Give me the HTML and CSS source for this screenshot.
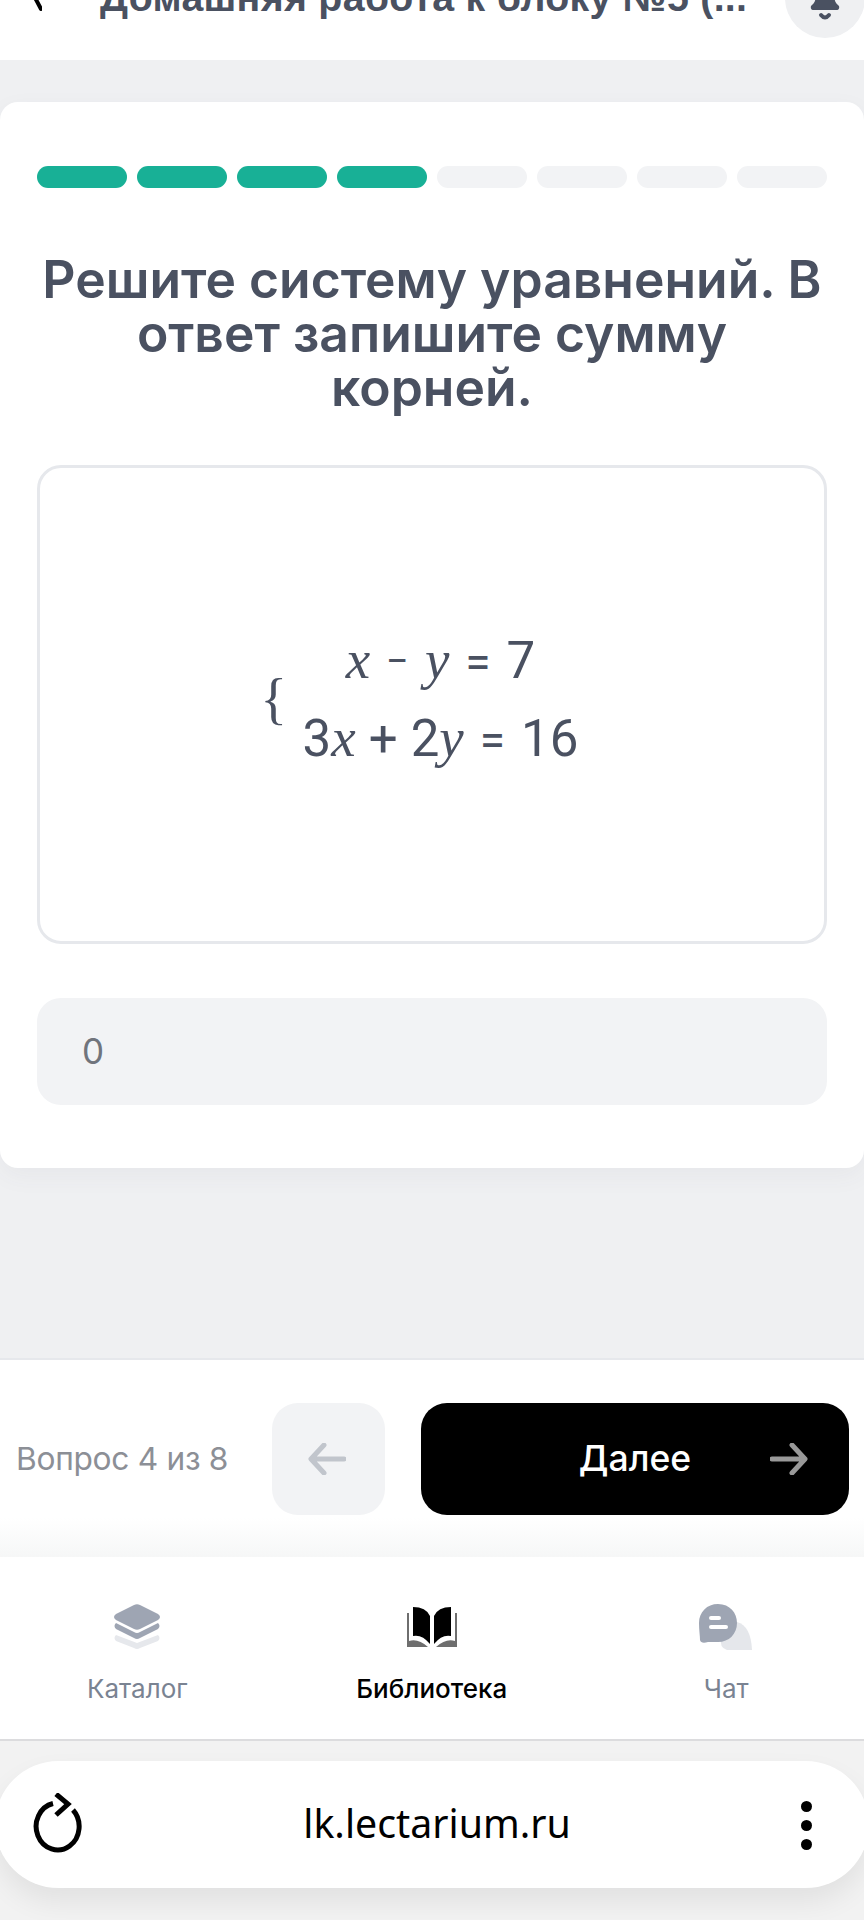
FILE: index.html
```html
<!DOCTYPE html>
<html lang="ru">
<head>
<meta charset="utf-8">
<title>Домашняя работа</title>
<link rel="stylesheet" href="styles.css">
</head>
<body>
<div class="screen">
  <header class="topbar">
    <svg class="back-icon" width="24" height="20" viewBox="0 0 24 20"><path d="M14 -8 L23 9" fill="none" stroke="#000" stroke-width="4" stroke-linecap="round"/></svg>
    <div class="top-title">Домашняя работа к блоку №5 (...</div>
    <div class="bell">
      <svg width="44" height="44" viewBox="0 0 44 44"><path d="M8 24 C13 20 13 16 13 8 H31 C31 16 31 20 36 24 Q37 28 33 28 H11 Q7 28 8 24Z" fill="#4a5161"/><path d="M18 33 Q22 38 26 33" fill="none" stroke="#4a5161" stroke-width="4" stroke-linecap="round"/></svg>
    </div>
  </header>
  <main class="content">
    <section class="card">
      <div class="progress">
        <span class="seg done"></span><span class="seg done"></span><span class="seg done"></span><span class="seg done"></span>
        <span class="seg"></span><span class="seg"></span><span class="seg"></span><span class="seg"></span>
      </div>
      <h1 class="question">Решите систему уравнений. В ответ запишите сумму корней.</h1>
      <div class="formula-box">
        <div class="formula">
          <span class="brace">{</span>
          <div class="lines">
            <div class="line"><i>x</i><span class="minus">−</span><i>y</i><span class="eq">=</span>7</div>
            <div class="line">3<i>x</i><span class="plus">+</span>2<i>y</i><span class="eq">=</span>16</div>
          </div>
        </div>
      </div>
      <div class="answer">0</div>
    </section>
  </main>
  <section class="pager">
    <span class="counter">Вопрос 4 из 8</span>
    <button class="prev" type="button">
      <svg width="38" height="32" viewBox="0 0 38 32"><path d="M36 16 H4 M16 2 L3 16 L16 30" fill="none" stroke="#c1c5cc" stroke-width="5" stroke-linecap="round" stroke-linejoin="round"/></svg>
    </button>
    <button class="next" type="button">
      <span>Далее</span>
      <svg class="next-arrow" width="38" height="32" viewBox="0 0 38 32"><path d="M2 16 H34 M22 2 L35 16 L22 30" fill="none" stroke="#999" stroke-width="5" stroke-linecap="round" stroke-linejoin="round"/></svg>
    </button>
  </section>
  <nav class="tabs">
    <div class="tab">
      <svg width="48" height="46" viewBox="0 0 48 46"><path d="M3 31 L24 39 L45 31 Q48 34 45 37 L27 44 Q24 46 21 44 L3 37 Q0 34 3 31Z" fill="#e6e8ec"/><path d="M3 19 L21 28 Q24 30 27 28 L45 19 Q48 22 45 25 L27 34 Q24 36 21 34 L3 25 Q0 22 3 19Z" fill="#9ea5b3"/><path d="M21 1 Q24 -0.5 27 1 L45 10 Q49 13 45 16 L27 25 Q24 26.5 21 25 L3 16 Q-1 13 3 10Z" fill="#9ea5b3"/></svg>
      <span class="tab-label">Каталог</span>
    </div>
    <div class="tab active">
      <svg width="52" height="42" viewBox="0 0 52 42"><path d="M1 7 V41 H22 Q12 32 3 35 V7Z M51 7 V41 H30 Q40 32 49 35 V7Z" fill="#6e6e6e"/><path d="M24 38 Q16 28 7 30 V1 Q20 1 24 10Z M28 38 Q36 28 45 30 V1 Q32 1 28 10Z" fill="#000"/></svg>
      <span class="tab-label">Библиотека</span>
    </div>
    <div class="tab">
      <svg width="54" height="46" viewBox="0 0 54 46"><path d="M38 18 Q52 22 53 46 H28 Q20 44 22 32Z" fill="#e5e7eb"/><path d="M19 0 C31 0 38 9 38 19 C38 30 30 38 19 38 L9 38 Q2 40 1 36 C1 32 0 26 0 19 C0 8 8 0 19 0Z" fill="#9ea5b3"/><rect x="10" y="12" width="12" height="4" rx="2" fill="#fff"/><rect x="10" y="21" width="19" height="4" rx="2" fill="#fff"/></svg>
      <span class="tab-label">Чат</span>
    </div>
  </nav>
  <div class="browser">
    <div class="urlbar">
      <svg width="52" height="60" viewBox="0 0 52 60"><path d="M40 17 A21.5 23.5 0 1 1 20 10.5" fill="none" stroke="#000" stroke-width="5"/><path d="M23 1 L35 11 L23 22" fill="none" stroke="#000" stroke-width="5"/></svg>
      <span class="url">lk.lectarium.ru</span>
      <div class="dots"><span></span><span></span><span></span></div>
    </div>
  </div>
</div>
</body>
</html>
```
FILE: styles.css
```css
* { box-sizing: border-box; }
html, body { margin: 0; padding: 0; }
body { width: 864px; height: 1920px; overflow: hidden; font-family: Inter, "Noto Sans", sans-serif; background: #f2f2f2; }
.screen { height: 1920px; display: flex; flex-direction: column; overflow: hidden; }

.topbar { height: 60px; flex: none; background: #fff; display: flex; align-items: flex-end; position: relative; overflow: hidden; padding-bottom: 41px; }
.back-icon { position: absolute; left: 18px; top: 0; }
.top-title { margin-left: 100px; width: 680px; font: 700 39.3px/44px "Liberation Sans", Arial, sans-serif; color: #4a5161; white-space: nowrap; letter-spacing: 0.3px; }
.bell { position: absolute; left: 785px; top: -42px; width: 80px; height: 80px; border-radius: 50%; background: #eff0f2; display: flex; align-items: center; justify-content: center; padding-top: 12px; }

.content { height: 1298px; flex: none; background: #eff0f2; padding-top: 42px; }
.card { height: 1066px; background: #fff; border-radius: 18px; padding: 64px 37px; box-shadow: 0 8px 24px rgba(70, 75, 90, 0.05); }
.progress { display: flex; gap: 10.5px; height: 22px; }
.seg { flex: 1; border-radius: 12px; background: #f2f3f5; }
.seg.done { background: #18b096; }
.question { margin: 64px 0 51px; font: 600 51.6px/54px Inter, sans-serif; color: #4a5161; text-align: center; }
.formula-box { height: 479px; border: 3px solid #e6e8ec; border-radius: 24px; display: flex; align-items: center; justify-content: center; }
.formula { display: flex; align-items: center; gap: 15.5px; color: #4a5161; margin-left: -25.5px; margin-top: -11px; }
.brace { font: 400 56px/56px "Liberation Serif", serif; margin-top: 0; }
.lines { display: flex; flex-direction: column; align-items: center; font: 400 51px/78px Roboto, sans-serif; }
.line { white-space: nowrap; height: 78px; }
.line i { font: italic 400 55px/78px "Liberation Serif", serif; }
.minus { font-size: 40px; margin: 0 16px; vertical-align: 3px; }
.plus { margin: 0 13px; }
.eq { margin: 0 16px; font-size: 46px; }
.answer { margin-top: 54px; height: 107px; border-radius: 24px; background: #f2f3f5; color: #70747c; font: 400 35px/107px Inter, sans-serif; padding-left: 45px; }

.pager { height: 199px; flex: none; border-top: 2px solid #e6e8ec; background: linear-gradient(#fff 80%, #f6f7f7 100%); display: flex; align-items: center; padding: 0 15px 0 16px; }
.counter { width: 256px; font: 400 31.7px/36px Inter, sans-serif; color: #8c8f96; white-space: nowrap; letter-spacing: -0.3px; }
.prev { width: 113px; height: 112px; border: 0; border-radius: 26px; background: #f2f3f5; display: flex; align-items: center; justify-content: center; padding: 0 4px 0 0; }
.next { margin-left: 36px; width: 428px; height: 112px; border: 0; border-radius: 26px; background: #000; color: #fff; font: 500 35.5px/44px Inter, sans-serif; display: flex; align-items: center; justify-content: center; position: relative; padding: 0; }
.next-arrow { position: absolute; right: 41px; top: 40px; }

.tabs { height: 184px; flex: none; background: #fff; border-bottom: 2px solid #dcdcde; display: grid; grid-template-columns: repeat(3, 294.5px); margin: 0 -10px; }
.tab { display: flex; flex-direction: column; align-items: center; padding-top: 47px; }
.tab svg { height: 46px; display: block; }
.tab-label { margin-top: 23px; font: 400 26px/32px Inter, sans-serif; color: #7a8392; }
.tab.active .tab-label { color: #000; font-weight: 500; }

.browser { flex: 1; background: #f2f2f2; padding-top: 20px; }
.urlbar { height: 127px; margin: 0 -5px; background: #fff; border-radius: 64px; box-shadow: 0 14px 28px rgba(0, 0, 0, 0.07); display: flex; align-items: center; padding: 0 57px 4px 38px; }
.url { flex: 1; text-align: center; font: 400 39.3px/50px "Noto Sans", sans-serif; color: #000; padding-right: 12px; }
.dots { display: flex; flex-direction: column; gap: 8px; margin-top: 6px; }
.dots span { width: 11px; height: 11px; border-radius: 50%; background: #000; }
```
